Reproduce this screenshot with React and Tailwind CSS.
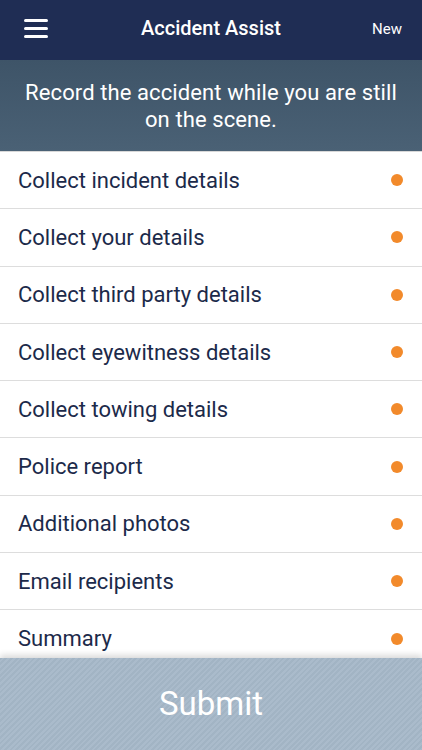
const items = [
  'Collect incident details',
  'Collect your details',
  'Collect third party details',
  'Collect eyewitness details',
  'Collect towing details',
  'Police report',
  'Additional photos',
  'Email recipients',
  'Summary',
];

const App = () => {
  return (
    <div className="h-[750px] w-full flex flex-col bg-white font-['Roboto',sans-serif] overflow-hidden">
      {/* Header */}
      <div className="h-[60px] shrink-0 bg-[#1f2d54] flex items-center justify-between px-6 relative">
        <div className="w-[24px] flex flex-col gap-[5px] -mt-[3px]">
          <span className="block h-[3px] bg-white rounded-sm" />
          <span className="block h-[3px] bg-white rounded-sm" />
          <span className="block h-[3px] bg-white rounded-sm" />
        </div>
        <h1 className="absolute left-0 right-0 text-center text-[20px] font-medium text-white -mt-[4px] pointer-events-none">
          Accident Assist
        </h1>
        <span className="text-[15px] text-white -mr-[4px] -mt-[2px]">New</span>
      </div>

      {/* Banner */}
      <div className="h-[92px] shrink-0 bg-gradient-to-b from-[#3e5468] to-[#4a6175] flex items-center justify-center px-6 border-b border-[#d8d8d8]">
        <p className="text-center text-white text-[22px] leading-[27px] tracking-[0.1px]">
          Record the accident while you are still on the scene.
        </p>
      </div>

      {/* List */}
      <div className="flex-1 overflow-hidden">
        {items.map((item) => (
          <div
            key={item}
            className="h-[57.3px] flex items-center justify-between pl-[18px] pr-[19px] border-b border-[#dddddd]"
          >
            <span className="text-[22px] text-[#1c2a4a]">{item}</span>
            <span className="w-[12px] h-[12px] rounded-full bg-[#f28a2b]" />
          </div>
        ))}
      </div>

      {/* Submit */}
      <button className="h-[92px] shrink-0 w-full bg-[repeating-linear-gradient(-45deg,#aabbcb_0px,#aabbcb_2px,#a2b4c4_2px,#a2b4c4_4px)] shadow-[0_-3px_6px_rgba(0,0,0,0.15)] text-white text-[33px] relative">
        Submit
      </button>
    </div>
  );
};

export default App;
